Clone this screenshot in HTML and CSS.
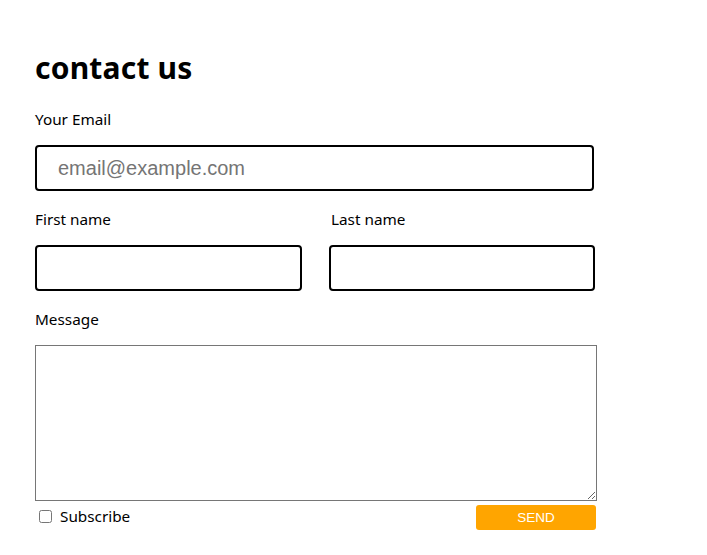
FILE: index.html
```html
<!DOCTYPE html>
<html lang="en">
<head>
<meta charset="utf-8">
<title>contact us</title>
<link rel="stylesheet" href="styles.css">
</head>
<body>
<form class="contact">
  <h1 class="title">contact us</h1>
  <div class="field">
    <label class="label" for="email">Your Email</label>
    <input class="input" id="email" type="email" placeholder="email@example.com">
  </div>
  <div class="names">
    <div class="field">
      <label class="label" for="first">First name</label>
      <input class="input" id="first" type="text">
    </div>
    <div class="field">
      <label class="label" for="last">Last name</label>
      <input class="input" id="last" type="text">
    </div>
  </div>
  <div class="field">
    <label class="label" for="msg">Message</label>
    <textarea class="message" id="msg"></textarea>
  </div>
  <div class="actions">
    <label class="subscribe"><input type="checkbox" class="check"> Subscribe</label>
    <button type="button" class="send">SEND</button>
  </div>
</form>
</body>
</html>
```
FILE: styles.css
```css
html, body {
  margin: 0;
  padding: 0;
  background: #fff;
}
body {
  font-family: "Noto Sans", "Open Sans", sans-serif;
  color: #000;
}
.contact {
  padding: 49px 0 0 35px;
  width: 562px;
}
.title {
  margin: 0;
  font-size: 30px;
  line-height: 38px;
  font-weight: 700;
  letter-spacing: 0.2px;
}
.field {
  display: flex;
  flex-direction: column;
}
.label {
  display: block;
  font-size: 15.3px;
  line-height: 24px;
  margin-top: 20px;
  margin-bottom: 14px;
}
.names .label {
  margin-top: 16px;
}
.names + .field .label {
  margin-top: 16px;
}
.input {
  box-sizing: border-box;
  width: 559px;
  height: 46px;
  border: 2px solid #000;
  border-radius: 4px;
  padding: 0 21px;
  font-family: "Liberation Sans", Arial, sans-serif;
  font-size: 20px;
  outline: none;
}
.input::placeholder {
  color: #757575;
}
.names {
  display: grid;
  grid-template-columns: 267px 266px;
  column-gap: 27px;
  width: 560px;
}
.names .input {
  width: 100%;
}
.names .field:last-child .label {
  padding-left: 2px;
}
.message {
  box-sizing: border-box;
  display: block;
  width: 562px;
  height: 156px;
  margin: 0;
  border: 1px solid #767676;
  border-radius: 0;
}
.actions {
  display: flex;
  justify-content: space-between;
  align-items: flex-start;
  margin-top: 4px;
  width: 561px;
}
.subscribe {
  display: flex;
  align-items: center;
  font-size: 15.3px;
  line-height: 22px;
}
.check {
  margin: 0 8px 0 4px;
  width: 13px;
  height: 13px;
}
.send {
  width: 120px;
  height: 25px;
  border: none;
  border-radius: 3px;
  background: #ffa500;
  color: #fff;
  font-family: "Liberation Sans", Arial, sans-serif;
  font-size: 13.5px;
  padding: 0;
}
```
